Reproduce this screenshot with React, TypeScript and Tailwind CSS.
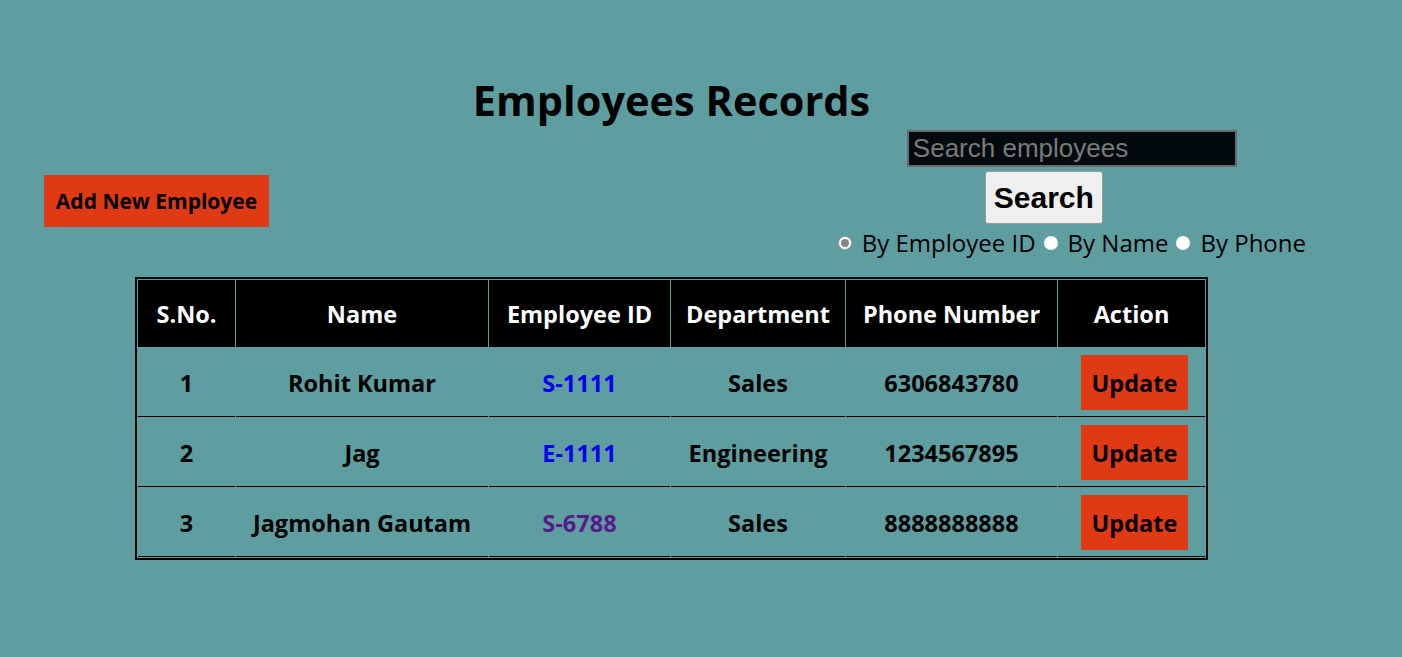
import React from "react";

const seg = { fontFamily: '"Open Sans", "Noto Sans", sans-serif' };
const arial = { fontFamily: '"Liberation Sans", Arial, sans-serif' };

const rows = [
  { n: 1, name: "Rohit Kumar", id: "S-1111", idColor: "text-[#0000ee]", dept: "Sales", phone: "6306843780" },
  { n: 2, name: "Jag", id: "E-1111", idColor: "text-[#0000ee]", dept: "Engineering", phone: "1234567895" },
  { n: 3, name: "Jagmohan Gautam", id: "S-6788", idColor: "text-[#551a8b]", dept: "Sales", phone: "8888888888" },
];

function Radio({ checked }: { checked?: boolean }) {
  return checked ? (
    <span className="inline-flex w-[14px] h-[14px] rounded-full bg-white border border-[#9a9a9a] items-center justify-center">
      <span className="w-[8px] h-[8px] rounded-full bg-[#858585]" />
    </span>
  ) : (
    <span className="inline-block w-[14px] h-[14px] rounded-full bg-white" />
  );
}

export default function App() {
  return (
    <div className="w-[1402px] h-[657px] bg-[#5f9ea0] overflow-hidden" style={seg}>
      <div className="w-[1343px]">
        <h1 className="text-center font-bold text-[41.5px] leading-[48px] text-black pt-[76px]">Employees Records</h1>
        <div className="flex justify-between pl-[44px] pr-[37px] mt-[6px]">
          <button className="mt-[45px] h-[52px] w-[225px] bg-[#e03a14] text-black font-bold text-[21px] leading-none" style={seg}>
            Add New Employee
          </button>
          <div className="flex flex-col items-center">
            <div
              className="w-[330px] h-[37px] bg-[#020a0d] border-2 border-[#6b6b6b] text-[#7b7b7b] text-[26px] leading-[33px] pl-[4px] text-left"
              style={arial}
            >
              Search employees
            </div>
            <button
              className="mt-[4px] mr-[56px] w-[118px] h-[53px] bg-[#efefef] border border-[#9a9a9a] rounded-[3px] text-black font-bold text-[30px] leading-none"
              style={arial}
            >
              Search
            </button>
            <div className="flex items-center text-[24px] leading-[32px] text-black mt-[3px]">
              <Radio checked />
              <span className="ml-[10px] mr-[8px]">By Employee ID</span>
              <Radio />
              <span className="ml-[10px] mr-[8px]">By Name</span>
              <Radio />
              <span className="ml-[10px]">By Phone</span>
            </div>
          </div>
        </div>
        <div className="flex justify-center mt-[18px]">
          <table className="w-[1073px] table-fixed border-2 border-black border-separate border-spacing-[1px] text-[23.5px] font-bold">
            <colgroup>
              <col className="w-[97px]" />
              <col className="w-[252px]" />
              <col className="w-[181px]" />
              <col className="w-[174px]" />
              <col className="w-[211px]" />
              <col className="w-[147px]" />
            </colgroup>
            <thead>
              <tr>
                {["S.No.", "Name", "Employee ID", "Department", "Phone Number", "Action"].map((h) => (
                  <th key={h} className="bg-black text-white h-[67px] pt-[3px] text-center font-bold">
                    {h}
                  </th>
                ))}
              </tr>
            </thead>
            <tbody>
              {rows.map((r) => (
                <tr key={r.n}>
                  <td className="h-[69px] pt-[3px] text-center border-b border-black">{r.n}</td>
                  <td className="pt-[3px] text-center border-b border-black">{r.name}</td>
                  <td className={"pt-[3px] text-center border-b border-black " + r.idColor}>{r.id}</td>
                  <td className="pt-[3px] text-center border-b border-black">{r.dept}</td>
                  <td className="pt-[3px] text-center border-b border-black">{r.phone}</td>
                  <td className="text-center border-b border-black">
                    <button className="ml-[6px] w-[107px] h-[55px] pt-[3px] bg-[#e03a14] text-black font-bold text-[23.5px]" style={seg}>
                      Update
                    </button>
                  </td>
                </tr>
              ))}
            </tbody>
          </table>
        </div>
      </div>
    </div>
  );
}
